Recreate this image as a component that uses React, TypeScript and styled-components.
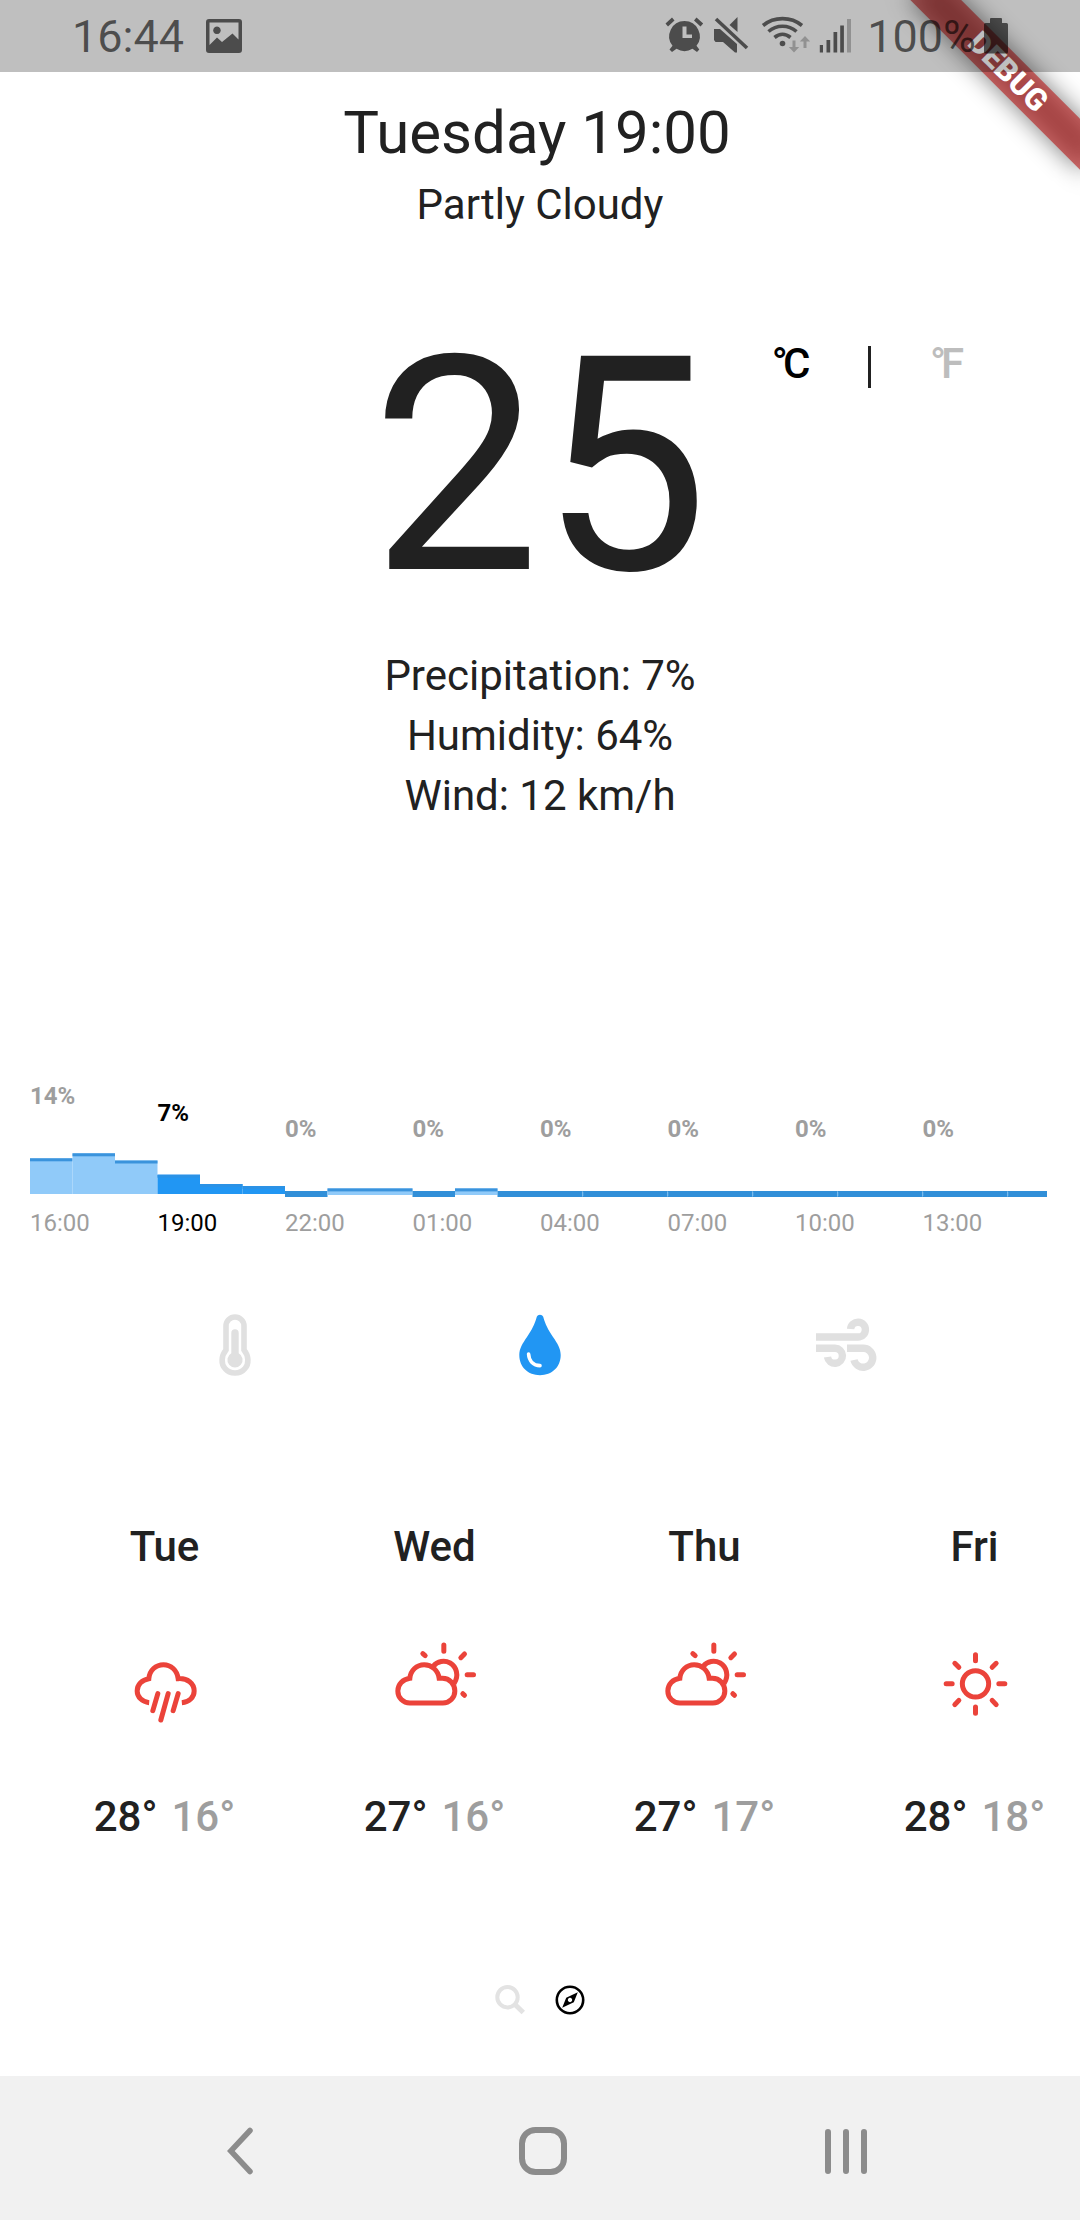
import React from "react";
import styled, { createGlobalStyle } from "styled-components";

const GlobalStyle = createGlobalStyle`
  * { box-sizing: border-box; }
  body { margin: 0; background: #fff; }
  svg { display: block; flex: none; }
`;

const Screen = styled.div`
  position: relative;
  display: flex;
  flex-direction: column;
  width: 1080px;
  height: 2220px;
  overflow: hidden;
  background: #fff;
  color: #212121;
  font-family: Roboto, "Liberation Sans", sans-serif;
`;

/* ---------- status bar ---------- */

const StatusBar = styled.header`
  position: relative;
  z-index: 2;
  flex: none;
  display: flex;
  justify-content: space-between;
  height: 72px;
  padding: 0 72px 0 72px;
  background: rgba(0, 0, 0, 0.25);
  color: rgba(0, 0, 0, 0.6);
`;

const StatusGroup = styled.div`
  display: flex;
  align-items: center;
`;

const StatusText = styled.span<{ $end?: boolean }>`
  font-size: 45px;
  line-height: 72px;
  white-space: nowrap;
  padding-top: 1px;
  margin: ${(p) => (p.$end ? "0 8px 0 10px" : "0 21.5px 0 0")};
`;

/* ---------- debug ribbon ---------- */

const RibbonShadow = styled.div`
  position: absolute;
  z-index: 1;
  left: 960px;
  top: 84px;
  width: 240px;
  height: 36px;
  transform-origin: 120px -84px;
  transform: rotate(45deg);
  background: rgba(0, 0, 0, 0.5);
  filter: blur(12px);
`;

const Ribbon = styled(RibbonShadow)`
  background: rgba(183, 28, 28, 0.627);
  filter: none;
  color: #fff;
  font-size: 30.6px;
  font-weight: 900;
  line-height: 36px;
  text-align: center;
`;

/* ---------- current weather ---------- */

const Title = styled.h1`
  margin: 25px 0 0;
  padding-right: 6px;
  font-size: 60px;
  font-weight: 400;
  line-height: 71px;
  text-align: center;
`;

const Subtitle = styled.p`
  margin: 13px 0 0;
  font-size: 42px;
  line-height: 48px;
  text-align: center;
`;

const Current = styled.section`
  display: grid;
  grid-template-columns: 1fr auto 1fr;
  height: 300px;
  margin-top: 88px;
`;

const Temperature = styled.div`
  grid-column: 2;
  font-size: 300px;
  line-height: 300px;
`;

const Units = styled.div`
  display: grid;
  grid-template-columns: repeat(3, 78px);
  justify-items: center;
  align-content: start;
  padding: 23px 0 0 43.5px;
`;

const Unit = styled.span<{ $active?: boolean }>`
  font-size: 42px;
  font-weight: 500;
  line-height: 48px;
  color: ${(p) => (p.$active ? "#000" : "#bdbdbd")};
`;

const Degree = styled.span`
  letter-spacing: -5px;
`;

const UnitDivider = styled.div`
  width: 3px;
  height: 42px;
  margin-top: 6px;
  background: #212121;
`;

const Details = styled.section`
  margin-top: 29px;
  font-size: 42px;
  line-height: 60px;
  text-align: center;
`;

/* ---------- hourly chart ---------- */

const Chart = styled.section`
  margin: 256px 33px 0 30px;
  width: 1020px;
`;

const ChartRow = styled.div<{ $height: number }>`
  display: grid;
  grid-template-columns: repeat(8, 127.5px);
  align-items: start;
  height: ${(p) => p.$height}px;
  font-size: 24px;
  line-height: 28px;
`;

const ChartValue = styled.span<{ $drop: number; $active: boolean }>`
  margin-top: ${(p) => p.$drop}px;
  font-weight: 700;
  color: ${(p) => (p.$active ? "#000" : "#9e9e9e")};
`;

const ChartTime = styled.span<{ $active: boolean }>`
  padding-top: 11px;
  color: ${(p) => (p.$active ? "#000" : "#9e9e9e")};
`;

/* ---------- metric tabs ---------- */

const Metrics = styled.nav`
  display: grid;
  grid-template-columns: 305px 305px 309px;
  justify-items: center;
  align-items: center;
  height: 80px;
  margin: 68px 0 0 82px;
`;

const MetricTab = styled.div<{ $active?: boolean }>`
  color: ${(p) => (p.$active ? "#2196f3" : "#e0e0e0")};
`;

/* ---------- daily forecast ---------- */

const Days = styled.section`
  display: flex;
  margin: 137px 0 0 29.5px;
`;

const Day = styled.div`
  flex: none;
  display: flex;
  flex-direction: column;
  align-items: center;
  width: 270px;
  font-size: 42px;
  font-weight: 500;
  line-height: 50px;
`;

const DayIcon = styled.div`
  margin: 67px 0 63px;
  color: #eb433a;
`;

const DayTemps = styled.div`
  display: flex;
  gap: 14px;
`;

const Low = styled.span`
  color: #9e9e9e;
`;

/* ---------- bottom ---------- */

const Pager = styled.nav`
  display: flex;
  justify-content: center;
  align-items: center;
  gap: 30px;
  height: 40px;
  margin-top: 138px;
`;

const NavBar = styled.footer`
  display: grid;
  grid-template-columns: repeat(3, 303px);
  justify-content: center;
  justify-items: center;
  align-items: center;
  height: 144px;
  margin-top: auto;
  padding: 6px 0 0 6px;
  background: #f1f1f1;
  color: #8c8c8c;
`;

const hours = [
  { time: "16:00", value: "14%", drop: 0 },
  { time: "19:00", value: "7%", drop: 17, active: true },
  { time: "22:00", value: "0%", drop: 33 },
  { time: "01:00", value: "0%", drop: 33 },
  { time: "04:00", value: "0%", drop: 33 },
  { time: "07:00", value: "0%", drop: 33 },
  { time: "10:00", value: "0%", drop: 33 },
  { time: "13:00", value: "0%", drop: 33 },
];

type Bar = { top: number; bottom: number; kind: "light" | "solid" | "flat" };

const bars: Bar[] = [
  { top: 16.3, bottom: 52, kind: "light" },
  { top: 11.3, bottom: 52, kind: "light" },
  { top: 18.5, bottom: 52, kind: "light" },
  { top: 32.7, bottom: 52, kind: "solid" },
  { top: 42, bottom: 52, kind: "solid" },
  { top: 44, bottom: 52, kind: "solid" },
  { top: 49, bottom: 55, kind: "flat" },
  { top: 46.4, bottom: 53, kind: "light" },
  { top: 46.4, bottom: 53, kind: "light" },
  { top: 49, bottom: 55, kind: "flat" },
  { top: 46.4, bottom: 53, kind: "light" },
  ...Array.from({ length: 13 }, (): Bar => ({ top: 49, bottom: 55, kind: "flat" })),
];

const BarChart = () => (
  <svg width="1017" height="56" viewBox="0 0 1017 56">
    {bars.map((b, i) => {
      const x = i * 42.5;
      const fill = b.kind === "light" ? "#90caf9" : b.kind === "solid" ? "#2196f3" : "#318fd8";
      return (
        <g key={i}>
          <rect x={x} y={b.top} width="42.5" height={b.bottom - b.top} fill={fill} />
          {b.kind === "light" && <rect x={x} y={b.top} width="42.5" height="3" fill="#3a93dc" />}
          {b.kind === "solid" && <rect x={x} y={b.top} width="42.5" height="3" fill="#2b92e6" />}
        </g>
      );
    })}
    {[13, 15, 17, 19, 21, 23].map((n) => (
      <rect key={n} x={n * 42.5} y="50" width="0.7" height="4" fill="#90caf9" />
    ))}
  </svg>
);

const PictureIcon = () => (
  <svg width="36" height="34" viewBox="0 0 36 34">
    <path
      fill="currentColor"
      fillRule="evenodd"
      d="M3 0H33A3 3 0 0 1 36 3V31A3 3 0 0 1 33 34H3A3 3 0 0 1 0 31V3A3 3 0 0 1 3 0ZM3.5 3.5V26L11 18.5L16 23L26.5 14.5L32.5 20.5V3.5ZM11 7.5A3.8 3.8 0 1 1 10.9 7.5Z"
    />
  </svg>
);

const StatusIcons = () => (
  <svg width="192" height="40" viewBox="0 0 192 40" fill="currentColor">
    {/* alarm clock */}
    <path
      fillRule="evenodd"
      d="M19.5 5A15.3 15.3 0 0 1 31.5 29.8L34.3 33.5L32 36L27.5 32.8A15.3 15.3 0 0 1 11.5 32.8L7 36L4.5 33.5L7.5 29.8A15.3 15.3 0 0 1 19.5 5ZM17.5 10.5V22H27V18.5H21.5V10.5Z"
    />
    <path d="M0.5 7.5L7 1.5L9.5 4.5L3 10.5ZM38.2 7.5L31.5 1.5L29 4.5L35.5 10.5Z" />
    {/* muted speaker */}
    <path d="M49 13H55L72 28V36.5H70L58 26H50.5L49 24ZM72.5 1V16L64.5 9Z" />
    <path d="M51 3L82 32" stroke="currentColor" strokeWidth="3.6" fill="none" />
    {/* wifi */}
    <g stroke="currentColor" strokeWidth="3.6" fill="none">
      <path d="M98 9.5C109 0.3 126 0.3 137 9.5" />
      <path d="M103.5 15.5C111.5 8.5 123.5 8.5 131.5 15.5" />
      <path d="M109.5 21.5C114.5 17.3 120.5 17.3 125.5 21.5" />
    </g>
    <circle cx="117.5" cy="27.5" r="2.8" />
    <path
      opacity="0.4"
      d="M127.5 24.5H130.5V31H134.2L129 36.5L123.8 31H127.5ZM138.5 32H141.5V25.5H145.2L140 20L134.8 25.5H138.5Z"
    />
    {/* signal */}
    <path d="M154.8 29H158V36.5H154.8ZM161.5 24H165.2V36.5H161.5ZM168.5 16H172.2V36.5H168.5ZM175.2 9.5H178.9V36.5H175.2Z" />
    <path opacity="0.4" d="M182 3H186V36.5H182Z" />
  </svg>
);

const BatteryIcon = () => (
  <svg width="24" height="36" viewBox="0 0 24 36" fill="currentColor">
    <path d="M7 0H17Q18 0 18 1V5H22.5Q24 5 24 6.5V34Q24 35.5 22.5 35.5H1.5Q0 35.5 0 34V6.5Q0 5 1.5 5H6V1Q6 0 7 0Z" />
  </svg>
);

const ThermometerIcon = () => (
  <svg width="32" height="62" viewBox="0 0 32 62">
    <path
      d="M7 36V12A9 9 0 0 1 25 12V36C30 42 30 50 26 54.5C21 60.5 11 60.5 6 54.5C2 50 2 42 7 36Z"
      fill="none"
      stroke="currentColor"
      strokeWidth="5.6"
    />
    <path
      d="M12.3 19A3.7 3.7 0 0 1 19.7 19V39.2A7.6 7.6 0 1 1 12.3 39.2Z"
      fill="currentColor"
    />
  </svg>
);

const DropIcon = () => (
  <svg width="42" height="62" viewBox="0 0 42 62">
    <path
      d="M17.8 2.8C18.8 0 23.2 0 24.2 2.8C26.5 11 29 15.5 34 23C38.5 29.5 41.7 34.5 41.7 41C41.7 53 33 61.2 21 61.2C9 61.2 0.3 53 0.3 41C0.3 34.5 3.5 29.5 8 23C13 15.5 15.5 11 17.8 2.8Z"
      fill="currentColor"
    />
    <path d="M9.6 40C10 47 14.5 51.5 21 51.6" fill="none" stroke="#fff" strokeWidth="3.6" strokeLinecap="round" />
  </svg>
);

const WindIcon = () => (
  <svg width="62" height="54" viewBox="0 0 62 54" fill="none" stroke="currentColor" strokeWidth="7.4">
    <path d="M0 19H42A7.4 7.4 0 1 0 34.6 11" />
    <path d="M0 30.3H19A7.5 7.5 0 1 1 11.5 39" />
    <path d="M31 30.3H47A9.5 9.5 0 1 1 38 42" />
  </svg>
);

const strokeProps = {
  fill: "none",
  stroke: "currentColor",
  strokeWidth: 15,
} as const;

const RainIcon = () => (
  <svg width="90" height="90" viewBox="178.5 420 270 270" {...strokeProps}>
    <path d="M266 611C245 609 230 594 230 576C230 556 245 542 265 539C267 514 286 497 309 497C331 497 350 514 353 539C381 537 401 553 401 576C401 595 386 609 364 611" />
    <path strokeLinecap="round" d="M292 584L277 635M323 584L301 663M353 584L338 635" />
  </svg>
);

const PartlyIcon = () => (
  <svg width="90" height="90" viewBox="988.5 420 270 270" {...strokeProps}>
    <path d="M1048 612C1028 612 1012 596 1012 576C1012 556 1027 541 1048 538C1050 514 1069 497 1091 497C1113 497 1133 514 1136 538H1146C1167 538 1183 555 1183 576C1183 596 1167 612 1147 612Z" />
    <path d="M1118 502C1131 486 1152 483 1169 492C1188 503 1196 530 1181 553" />
    <path
      strokeLinecap="round"
      d="M1150 438V457M1087 464L1094 470M1212 465L1201 476M1220 527H1239M1207 584L1212 589"
    />
  </svg>
);

const SunIcon = () => (
  <svg width="90" height="90" viewBox="988.5 420 270 270" {...strokeProps}>
    <circle cx="1125" cy="554.5" r="39.5" />
    <path
      strokeLinecap="round"
      d="M1125 467V485M1125 624V643M1037 554H1055M1195 554H1213M1063 493L1075 505M1187 493L1175 505M1063 617L1075 604M1187 617L1175 604"
    />
  </svg>
);

const SearchIcon = () => (
  <svg width="30" height="30" viewBox="0 0 30 30" fill="none" stroke="#e3e3e3" strokeWidth="4">
    <circle cx="12.5" cy="12.2" r="10.2" />
    <path d="M20.5 20L28.3 27.5" strokeWidth="5" />
  </svg>
);

const CompassIcon = () => (
  <svg width="30" height="30" viewBox="0 0 30 30">
    <circle cx="15" cy="15" r="13.2" fill="none" stroke="#000" strokeWidth="2.6" />
    <path
      fill="#000"
      fillRule="evenodd"
      d="M22.8 7.2L18.8 17.2L7.2 22.8L11.2 12.8ZM15 12.8A2.2 2.2 0 1 0 15.01 12.8Z"
    />
  </svg>
);

const BackIcon = () => (
  <svg width="26" height="48" viewBox="0 0 26 48" fill="none" stroke="currentColor" strokeWidth="5.5">
    <path d="M23 3.5L3.8 24L23 44.5" strokeLinecap="round" />
  </svg>
);

const HomeIcon = () => (
  <svg width="48" height="48" viewBox="0 0 48 48">
    <rect x="3" y="3" width="42" height="42" rx="13.5" fill="none" stroke="currentColor" strokeWidth="6" />
  </svg>
);

const RecentsIcon = () => (
  <svg width="42" height="45" viewBox="0 0 42 45" stroke="currentColor" strokeWidth="6" strokeLinecap="round">
    <path d="M3 3V42M21 3V42M39 3V42" />
  </svg>
);

const days = [
  { name: "Tue", icon: <RainIcon />, high: "28°", low: "16°" },
  { name: "Wed", icon: <PartlyIcon />, high: "27°", low: "16°" },
  { name: "Thu", icon: <PartlyIcon />, high: "27°", low: "17°" },
  { name: "Fri", icon: <SunIcon />, high: "28°", low: "18°" },
];

export default function App() {
  return (
    <Screen>
      <GlobalStyle />
      <StatusBar>
        <StatusGroup>
          <StatusText>16:44</StatusText>
          <PictureIcon />
        </StatusGroup>
        <StatusGroup>
          <StatusIcons />
          <StatusText $end>100%</StatusText>
          <BatteryIcon />
        </StatusGroup>
      </StatusBar>
      <RibbonShadow />
      <Ribbon>DEBUG</Ribbon>

      <Title>Tuesday 19:00</Title>
      <Subtitle>Partly Cloudy</Subtitle>

      <Current>
        <Temperature>25</Temperature>
        <Units>
          <Unit $active>
            <Degree>°</Degree>C
          </Unit>
          <UnitDivider />
          <Unit>
            <Degree>°</Degree>F
          </Unit>
        </Units>
      </Current>

      <Details>
        <div>Precipitation: 7%</div>
        <div>Humidity: 64%</div>
        <div>Wind: 12 km/h</div>
      </Details>

      <Chart>
        <ChartRow $height={60}>
          {hours.map((h) => (
            <ChartValue key={h.time} $drop={h.drop} $active={!!h.active}>
              {h.value}
            </ChartValue>
          ))}
        </ChartRow>
        <BarChart />
        <ChartRow $height={39}>
          {hours.map((h) => (
            <ChartTime key={h.time} $active={!!h.active}>
              {h.time}
            </ChartTime>
          ))}
        </ChartRow>
      </Chart>

      <Metrics>
        <MetricTab>
          <ThermometerIcon />
        </MetricTab>
        <MetricTab $active>
          <DropIcon />
        </MetricTab>
        <MetricTab>
          <WindIcon />
        </MetricTab>
      </Metrics>

      <Days>
        {days.map((d) => (
          <Day key={d.name}>
            <span>{d.name}</span>
            <DayIcon>{d.icon}</DayIcon>
            <DayTemps>
              <span>{d.high}</span>
              <Low>{d.low}</Low>
            </DayTemps>
          </Day>
        ))}
      </Days>

      <Pager>
        <SearchIcon />
        <CompassIcon />
      </Pager>

      <NavBar>
        <BackIcon />
        <HomeIcon />
        <RecentsIcon />
      </NavBar>
    </Screen>
  );
}
